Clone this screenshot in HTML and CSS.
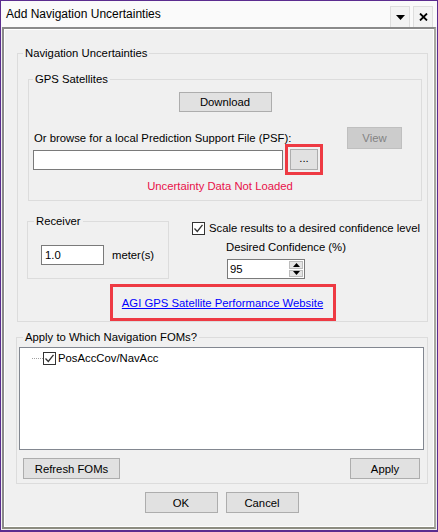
FILE: index.html
```html
<!DOCTYPE html>
<html lang="en">
<head>
    <meta charset="UTF-8">
    <title>Add Navigation Uncertainties</title>
    <link rel="stylesheet" href="styles.css">
</head>
<body>
    <div class="window">
        <div class="titlebar">
            <span class="title">Add Navigation Uncertainties</span>
            <div class="title-buttons">
                <span class="tbtn">
                    <svg width="9" height="5" viewBox="0 0 9 5"><path d="M0 0h9L4.5 5z" fill="#000"/></svg>
                </span>
                <span class="tbtn">
                    <svg width="9" height="8" viewBox="0 0 9 8"><path d="M1 0.5l7 7M8 0.5l-7 7" stroke="#000" stroke-width="1.8"/></svg>
                </span>
            </div>
        </div>

        <div class="frame">
            <!-- Navigation Uncertainties -->
            <fieldset class="group nav-group">
                <legend>Navigation Uncertainties</legend>

                <fieldset class="group gps-group">
                    <legend>GPS Satellites</legend>
                    <div class="center-row">
                        <button type="button" class="btn download">Download</button>
                    </div>
                    <div class="browse-head">
                        <span>Or browse for a local Prediction Support File (PSF):</span>
                        <button type="button" class="btn view" disabled>View</button>
                    </div>
                    <div class="browse-row">
                        <input type="text" class="textbox psf-input">
                        <span class="highlight">
                            <button type="button" class="btn browse">...</button>
                        </span>
                    </div>
                    <div class="status">Uncertainty Data Not Loaded</div>
                </fieldset>

                <div class="options-row">
                    <fieldset class="group receiver-group">
                        <legend>Receiver</legend>
                        <div class="receiver-row">
                            <input type="text" class="textbox receiver-input" value="1.0">
                            <span>meter(s)</span>
                        </div>
                    </fieldset>
                    <div class="confidence">
                        <div class="check-row">
                            <span class="checkbox">
                                <svg width="11" height="11" viewBox="0 0 11 11"><path d="M1.5 5.5l2.8 3L9.5 1.8" stroke="#333" stroke-width="1.3" fill="none"/></svg>
                            </span>
                            <span>Scale results to a desired confidence level</span>
                        </div>
                        <div class="conf-label">Desired Confidence (%)</div>
                        <div class="spinner">
                            <input type="text" class="spin-input" value="95">
                            <span class="spin-btns">
                                <span class="spin-btn"><svg width="7" height="4" viewBox="0 0 7 4"><path d="M3.5 0L7 4H0z" fill="#000"/></svg></span>
                                <span class="spin-btn"><svg width="7" height="4" viewBox="0 0 7 4"><path d="M0 0h7L3.5 4z" fill="#000"/></svg></span>
                            </span>
                        </div>
                    </div>
                </div>

                <div class="link-row">
                    <span class="highlight link-box">
                        <a href="#">AGI GPS Satellite Performance Website</a>
                    </span>
                </div>
            </fieldset>

            <!-- FOM selection -->
            <fieldset class="group foms-group">
                <legend>Apply to Which Navigation FOMs?</legend>
                <div class="tree">
                    <div class="tree-item">
                        <span class="tree-line"></span>
                        <span class="checkbox">
                            <svg width="11" height="11" viewBox="0 0 11 11"><path d="M1.5 5.5l2.8 3L9.5 1.8" stroke="#333" stroke-width="1.3" fill="none"/></svg>
                        </span>
                        <span>PosAccCov/NavAcc</span>
                    </div>
                </div>
                <div class="foms-buttons">
                    <button type="button" class="btn refresh">Refresh FOMs</button>
                    <button type="button" class="btn apply">Apply</button>
                </div>
            </fieldset>

            <div class="dialog-buttons">
                <button type="button" class="btn dialog-btn">OK</button>
                <button type="button" class="btn dialog-btn">Cancel</button>
            </div>
        </div>
    </div>
</body>
</html>
```

FILE: styles.css
```css
html, body {
    margin: 0;
    padding: 0;
}
body {
    font-family: "Liberation Sans", Arial, sans-serif;
    font-size: 11.3px;
    line-height: 14px;
    color: #000;
    background: #fff;
}
.window {
    width: 438px;
    height: 532px;
    box-sizing: border-box;
    border: 1px solid #5b2c8f;
    border-bottom-width: 2px;
    background: #f0f0f0;
    display: flex;
    flex-direction: column;
}
.titlebar {
    height: 26px;
    background: #fafafa;
    display: flex;
    align-items: center;
    justify-content: space-between;
    padding-left: 5px;
    flex: none;
}
.title {
    font-size: 12px;
}
.title-buttons {
    display: flex;
    gap: 3px;
    padding-right: 4px;
    align-self: flex-end;
}
.tbtn {
    width: 20px;
    height: 21px;
    box-sizing: border-box;
    border: 1px solid #dedede;
    border-bottom: none;
    background: #f3f3f3;
    display: flex;
    align-items: center;
    justify-content: center;
}
.frame {
    flex: 1;
    margin: 0 1px 1px 1px;
    border: 2px solid;
    border-color: #8a8a8a #a8a8a0 #8c8c80 #8a8a8a;
    box-shadow: inset 1px 1px 0 #fff, inset -1px -1px 0 #fff;
    display: flex;
    flex-direction: column;
}

/* group boxes */
.group {
    border: 1px solid #dcdcdc;
    margin: 0;
    min-width: 0;
}
.group legend {
    padding: 0 2px;
}
.nav-group {
    margin: 17px 6px 0 13px;
    padding: 0 5px 0 5px;
}
.gps-group {
    margin: 12px 0 0 5px;
    padding: 0 19px 7px 4px;
}
.center-row {
    display: flex;
    justify-content: center;
    margin-top: 6px;
    padding-left: 15px;
}
.btn {
    font-family: inherit;
    font-size: 11.3px;
    color: #000;
    background: #e1e1e1;
    border: 1px solid #adadad;
    border-radius: 0;
    padding: 0;
    height: 21px;
}
.download {
    width: 93px;
    height: 20px;
}
.browse-head {
    display: flex;
    justify-content: space-between;
    align-items: center;
    margin-top: 15px;
    padding-left: 1px;
}
.view {
    width: 55px;
    height: 22px;
    background: #cccccc;
    border-color: #bfbfbf;
    color: #838383;
}
.browse-row {
    display: flex;
    align-items: center;
    margin-top: -5px;
}
.textbox {
    font-family: inherit;
    font-size: 11.3px;
    height: 20px;
    box-sizing: border-box;
    border: 1px solid #7a7a7a;
    background: #fff;
    padding: 0 3px;
    margin: 0;
    outline: none;
}
.psf-input {
    width: 250px;
}
.highlight {
    border: 3px solid #ee3a43;
    display: inline-flex;
    align-items: center;
    justify-content: center;
}
.browse-row .highlight {
    margin-left: 2px;
    padding: 2px;
}
.browse {
    width: 28px;
    height: 21px;
    line-height: 10px;
    padding-bottom: 4px;
}
.status {
    color: #e8104a;
    text-align: center;
    margin-top: 4px;
    padding-left: 5px;
}

/* receiver + confidence */
.options-row {
    display: flex;
    margin-top: 13px;
}
.receiver-group {
    width: 142px;
    box-sizing: border-box;
    margin-left: 4px;
    padding: 0 6px 13px 6px;
}
.receiver-row {
    display: flex;
    align-items: center;
    gap: 8px;
    margin-top: 17px;
    padding-left: 7px;
}
.receiver-input {
    width: 63px;
}
.confidence {
    margin-left: 23px;
    padding-top: 7px;
}
.check-row {
    display: flex;
    align-items: center;
    gap: 4px;
}
.checkbox {
    width: 13px;
    height: 13px;
    box-sizing: border-box;
    border: 1px solid #333;
    background: #fff;
    display: inline-flex;
    align-items: center;
    justify-content: center;
}
.conf-label {
    margin-top: 5px;
    padding-left: 34px;
}
.spinner {
    margin: 5px 0 0 35px;
    width: 78px;
    height: 20px;
    box-sizing: border-box;
    border: 1px solid #7a7a7a;
    background: #fff;
    display: flex;
}
.spin-input {
    flex: 1;
    min-width: 0;
    border: none;
    font-family: inherit;
    font-size: 11.3px;
    padding: 0 2px;
    outline: none;
}
.spin-btns {
    width: 14px;
    display: flex;
    flex-direction: column;
    gap: 1px;
    padding: 1px;
}
.spin-btn {
    flex: 1;
    background: #e5e5e5;
    border: 1px solid #bcbcbc;
    display: flex;
    align-items: center;
    justify-content: center;
}
.link-row {
    display: flex;
    justify-content: center;
    margin-top: 5px;
}
.link-box {
    width: 226px;
    height: 37px;
    box-sizing: border-box;
}
.link-box a {
    color: #0000ff;
    text-decoration: underline;
}

/* FOMs */
.foms-group {
    margin: 8px 6px 0 12px;
    padding: 0 3px 4px 2px;
}
.foms-group legend {
    margin-left: 4px;
}
.tree {
    margin-top: 3px;
    height: 103px;
    box-sizing: border-box;
    border: 1px solid #828790;
    background: #fff;
    padding: 3px 0 0 12px;
}
.tree-item {
    display: flex;
    align-items: center;
    height: 14px;
}
.tree-line {
    width: 11px;
    border-top: 1px dotted #a0a0a0;
}
.tree-item .checkbox {
    margin-right: 2px;
}
.foms-buttons {
    display: flex;
    justify-content: space-between;
    margin-top: 8px;
    padding: 0 4px;
}
.refresh {
    width: 97px;
}
.apply {
    width: 70px;
}
.dialog-buttons {
    display: flex;
    justify-content: center;
    gap: 8px;
    margin-top: 8px;
    padding-left: 5px;
}
.dialog-btn {
    width: 73px;
}
```
